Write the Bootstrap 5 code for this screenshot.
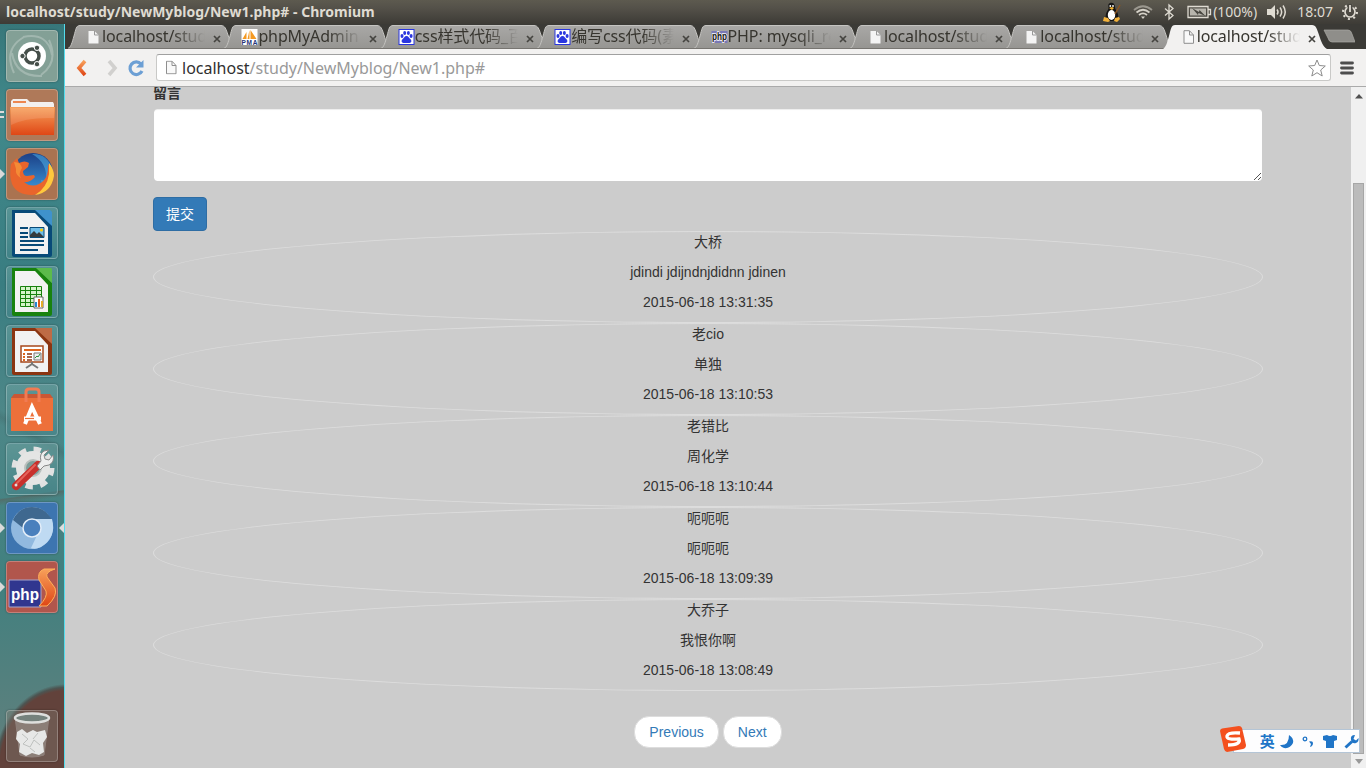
<!DOCTYPE html>
<html lang="zh">
<head>
<meta charset="utf-8">
<title>localhost/study/NewMyblog/New1.php#</title>
<link href="https://cdn.jsdelivr.net/npm/bootstrap@5.3.0/dist/css/bootstrap.min.css" rel="stylesheet">
<style>
body{font-family:"Liberation Sans","Noto Sans CJK SC",sans-serif;font-size:14px;line-height:20px;color:#333;background:#ccc}
svg{display:block;flex:none}
.ui-font{font-family:"Noto Sans","Noto Sans CJK SC",sans-serif}
.sysbar{height:24px;background:linear-gradient(#5d5a4f,#55524a 30%,#3d3b36);color:#dfdbd2;padding-left:6px;padding-right:7px}
.sysbar .caption-text{font-weight:700;font-size:14px;letter-spacing:.02px;white-space:nowrap}
.sysbar .tray-text{font-size:14px;white-space:nowrap}
.dock{width:65px;padding:6px 0 6px 6px;background:radial-gradient(ellipse 72px 84px at 66px 744px,#62423b 0 92%,#4c5552 96%,transparent 100%),linear-gradient(172deg,transparent 63%,#526f6c 63.2%,transparent 64%),linear-gradient(30deg,transparent 44%,#41696a66 45%,transparent 46%),linear-gradient(#37777a,#41898b 12%,#397d81 35%,#4d8788 52%,#41807f 75%,#63807d 100%);border-right:1px solid #54dced;gap:7px}
.tile{width:52px;height:52px;border-radius:4px;border:1px solid #ffffff40;background:linear-gradient(#6fa3a288,#47868c88);box-shadow:0 0 2px #0006}
.tile>svg{margin:-1px}
.pip{left:-6px;top:21px}
.tabs{height:25px;background:#3b3a36;padding-left:3px}
.tab{width:156.4px;height:25px;padding-left:17px;color:#37352f}
.tab .shape{left:0;top:1px}
.tab .ico{width:17px}
.tab .ttl{width:103px;height:24px;line-height:23px;font-size:16px;white-space:nowrap;overflow:hidden;letter-spacing:-.12px;-webkit-mask-image:linear-gradient(90deg,#000 68%,transparent);mask-image:linear-gradient(90deg,#000 68%,transparent)}
.tools{height:38px;background:#f2f1f0;border-bottom:1px solid #aaa;padding-left:10px}
.omni{height:27px;width:1175px;background:#fff;border:1px solid #c9c9c7;border-top-color:#a0a0a0;border-radius:3px;font-size:16px;color:#999}
.omni b{font-weight:400;color:#303030}
.page-pane{background:#ccc}
.wrap{width:1110px;margin-left:88px;margin-top:-4px}
.wrap label{font-weight:700;margin-bottom:5px;height:20px}
.wrap .form-control{height:74px;border:1px solid #ccc;border-radius:4px;box-shadow:inset 0 1px 1px #00000013;resize:none}
.send{height:34px;width:54px;padding:0;font-size:14px;line-height:20px;border-radius:4px;background:#337ab7;border-color:#2e6da4}
.note{height:92px;border:1px solid #ddd;border-radius:50%}
.note p{margin:0 0 10px}
.pg{padding:5px 14px;border:1px solid #ddd;border-radius:15px;background:#fff;color:#337ab7;text-decoration:none}
.sbar{width:15px;background:#f0f0f0;padding:7px 2px 4px}
.thumb{width:11px;height:571px;background:#bbb;border:1px solid #a6a6a6;margin-top:84px}
.ime{left:1219px;top:725px;width:142px;height:30px}
.ime-box{left:14px;top:4px;width:127px;height:24px;background:#fdfdfe;border:1px solid #b4c5d6;color:#2075c7;padding-left:19px}
.ime-box b{font-size:15px;width:16px;line-height:20px}
</style>
</head>
<body class="vh-100 overflow-hidden d-flex flex-column">
<svg width="0" height="0" class="position-absolute"><defs>
<linearGradient id="tg" x2="0" y2="1"><stop stop-color="#a9a8a6"/><stop offset="1" stop-color="#969592"/></linearGradient>
<linearGradient id="or" x2="0" y2="1"><stop stop-color="#f7a05a"/><stop offset="1" stop-color="#df4716"/></linearGradient>
<linearGradient id="gr" x2="0" y2="1"><stop stop-color="#fff"/><stop offset="1" stop-color="#c9c9c9"/></linearGradient>
<linearGradient id="bl" x2="0" y2="1"><stop stop-color="#1b3f86"/><stop offset="1" stop-color="#3d9bdc"/></linearGradient>
<symbol id="shape" viewBox="0 0 168 24"><path d="M0 23.500C3 22 4 18 6 11S8 .5 12 .5H153C157 .5 158 4 160 10S163 22 167 23.500Z" fill="url(#tg)" stroke="#c5c4c1"/><path d="M0 23.500H168" stroke="#777571"/></symbol>
<symbol id="doc" viewBox="0 0 12 14"><path d="M1 1h6l4 4v8.500H1z" fill="#f4f4f4"/><path d="M7 1v4h4" fill="none" stroke="#999"/></symbol>
<symbol id="docline" viewBox="0 0 12 14"><path d="M1.500 .7h5.500l4 4.300v8.300H1.500zM7 1v4h4" fill="#f9f9f9" stroke="#8e8e8e"/></symbol>
<symbol id="x" viewBox="0 0 8 8"><path d="M1 1l6 6M7 1L1 7" stroke="#454440" stroke-width="1.700"/></symbol>
<symbol id="paw" viewBox="0 0 16 16"><path d="M0 0h16v16H0z" fill="#2a36df"/><path d="M1 1h14v14H1z" fill="#fff"/><g fill="#2a36df"><ellipse cx="3.500" cy="7" rx="1.500" ry="2"/><ellipse cx="6.200" cy="4" rx="1.500" ry="2"/><ellipse cx="9.900" cy="4" rx="1.500" ry="2"/><ellipse cx="12.600" cy="7" rx="1.500" ry="2"/><path d="M8 7c2 0 2.500 2 4 3.300s1 3.700-1 3.700H5c-2 0-2.500-2.400-1-3.700S6 7 8 7z"/></g></symbol>
<symbol id="pipl" viewBox="0 0 5 10"><path d="M0 0l5 5-5 5z" fill="#dadada"/></symbol>
</defs></svg>

<header class="sysbar ui-font d-flex align-items-center">
  <div class="caption-text">localhost/study/NewMyblog/New1.php# - Chromium</div>
  <div class="ms-auto d-flex align-items-center">
    <svg width="22" height="22" viewBox="0 0 22 22"><path d="M9 2c3-1 5 1 5 4 0 3 4 6 3 10-1 3-3 4-7 4-5 0-6-3-5-7S8 9 7.500 6 8 2.500 9 2z" fill="#141414"/><ellipse cx="10.500" cy="14" rx="3.700" ry="5" fill="#fff"/><path d="M8 7l3-1 2 1-2 2z" fill="#f8b530"/><path d="M3 16l4 1 2 3-2 1-5-1zM14 17l4-1 1 2-3 3-3-1z" fill="#f3b23b"/><path d="M14 13l5-9" stroke="#8b5422" stroke-width="1.500"/><circle cx="9.300" cy="5" r=".9" fill="#fff"/><circle cx="12" cy="5" r=".9" fill="#fff"/></svg>
    <svg class="ms-2" width="24" height="18" viewBox="0 0 24 18" fill="none" stroke="#d6d2c9" stroke-width="1.700"><path d="M3 7Q12-.5 21 7" opacity=".55"/><path d="M5.500 9.500q6.500-5.500 13 0M8 12q4-3.300 8 0"/><path d="M10 13.500h4l-2 2.500z" fill="#d6d2c9" stroke="none"/></svg>
    <svg class="ms-1" width="20" height="18" viewBox="0 0 20 18" fill="none" stroke="#dfdbd2" stroke-width="1.300"><path d="M6 5.500l8 7L10 16V2l4 3.500-8 7"/></svg>
    <svg class="ms-2" width="26" height="14" viewBox="0 0 26 14"><path d="M1 1.500h20v11H1zM21.500 4.500h2v5h-2" fill="none" stroke="#dfdbd2" stroke-width="1.300"/><path d="M3 3.500h16v7H3z" fill="#b7b4ac"/><path d="M5 3l7 4 .5-2 6 6-7-3-.5 2z" fill="#47453f"/></svg>
    <span class="tray-text battery">(100%)</span>
    <svg class="ms-2 me-2" width="24" height="18" viewBox="0 0 24 18"><path d="M2 6h4l4-4v14l-4-4H2z" fill="#dfdbd2"/><path d="M12 6.500q2 2.500 0 5M15 4.500q3.300 4.500 0 9M18 2.500q4.500 6.500 0 13" stroke="#dfdbd2" stroke-width="1.500" fill="none"/></svg>
    <span class="tray-text clock">18:07</span>
    <svg class="ms-2" width="18" height="18" viewBox="0 0 18 18" fill="none" stroke="#dfdbd2"><circle cx="9" cy="9" r="5" stroke-width="1.700"/><circle cx="9" cy="9" r="7" stroke-width="2" stroke-dasharray="2 3.500"/><path d="M9 1v7" stroke="#4b4942" stroke-width="5"/><path d="M9 2v7" stroke-width="1.800"/></svg>
  </div>
</header>

<div class="d-flex flex-grow-1 overflow-hidden">
<nav class="dock d-flex flex-column flex-shrink-0">
  <div class="tile" style="background:#83a096"><svg width="52" height="52"><path d="M8 43Q-3 19 18 7 M43 10Q53 32 35 45M17 7Q42 2 46 25M6 23Q10 47 36 46" fill="none" stroke="#b5c7bf" stroke-width="2" opacity=".6"/><circle cx="26" cy="26" r="14" fill="#fff"/><circle cx="26" cy="26" r="7" fill="none" stroke="#454e49" stroke-width="3.500"/><g fill="#454e49" stroke="#fff"><circle cx="16.500" cy="26" r="2.700"/><circle cx="31" cy="17.800" r="2.700"/><circle cx="31" cy="34.200" r="2.700"/></g></svg></div>
  <div class="tile position-relative" style="background:#af7959"><svg class="position-absolute pip" width="5" height="10" style="left:-7px"><path d="M0 2h5M0 7h5" stroke="#ddd" stroke-width="2"/></svg><svg width="52" height="52"><path d="M5 20V12l2-2h14l3 3h23l1 2v6z" fill="#f3f0ee"/><path d="M7 13h13" stroke="#ed8750" stroke-width="2"/><path d="M4 18h45l-1 28H5z" fill="url(#or)"/><path d="M5 19h43v10Q20 28 5 36z" fill="#fff" opacity=".12"/></svg></div>
  <div class="tile position-relative" style="background:#aa7350"><svg class="position-absolute pip" width="5" height="10"><use href="#pipl"/></svg><svg width="52" height="52"><circle cx="27" cy="25" r="20" fill="url(#bl)"/><path d="M26 6q15-1 20 15 2 14-9 21l-2-10 5 1Q42 15 26 6z" fill="#4eb1e5" opacity=".55"/><path d="M5 16l6-6 2 5q6-3 10 0l-1 4-5 4q0 5 4 5l7-1 1 2q-5 6-11 5 7 6 15 2 10-5 9-20 5 7 2 17-4 13-18 14Q11 47 6 36 3 27 5 16z" fill="#e9652c"/><path d="M43 15q5 6 5 13-3 17-19 19 12-7 14-21z" fill="#ffc83d"/><path d="M8 14q7 0 8 6-4 6-1 10-6-3-5-9z" fill="#f48b36"/></svg></div>
  <div class="tile"><svg width="52" height="52"><path d="M6 3H32L46 17V48Q46 50 44 50H8Q6 50 6 48z" fill="#084a78"/><path d="M9 6h20l13 14v27H9z" fill="#f2f2f2"/><path d="M29 3h15l2 2v14z" fill="#3f92cc"/><path d="M14 21h8M14 26h8M14 30h8M14 34h24M14 38h24M14 43h18" stroke="#084a78" stroke-width="2"/><path d="M24 20.500h14v10H24z" fill="#6fbde8" stroke="#084a78"/><path d="M24 30v-2l4-4 3 3 2-2 5 5z" fill="#343a3d"/><circle cx="35.500" cy="23" r="1.500" fill="#fc0"/></svg></div>
  <div class="tile"><svg width="52" height="52"><path d="M6 2H32L46 17V48Q46 50 44 50H8Q6 50 6 48z" fill="#18820e"/><path d="M9 5h20l13 14v27H9z" fill="#f2f2f2"/><path d="M30 2h15l1 1v14z" fill="#5cbb4b"/><path d="M14.500 20.500h21v20h-21z" fill="#d6f3ca"/><path d="M14.500 20.500h21v20h-21zM14 24.500h22M14 28.500h22M14 32.500h22M14 36.500h22M19.500 20v20M24.500 20v20M30.500 20v20" fill="none" stroke="#18820e"/><path d="M28 31h9v11h-9z" fill="#fff" stroke="#666"/><path d="M29 36h2v5h-2z" fill="#2587d2"/><path d="M32 33h2v8h-2z" fill="#dd5b1d"/><path d="M35 35h2v6h-2z" fill="#e3ac29"/></svg></div>
  <div class="tile"><svg width="52" height="52"><path d="M6 3H32L46 17V48Q46 50 44 50H8Q6 50 6 48z" fill="#8b3511"/><path d="M9 6h20l13 14v27H9z" fill="#f2f2f2"/><path d="M29 3h17v16z" fill="#be6b45"/><path d="M15 21h22v16H15z" fill="#fff" stroke="#a6481c" stroke-width="1.500"/><path d="M18 25h17" stroke="#df651c" stroke-width="2"/><path d="M17 29h2M17 32h2M17 35h2" stroke="#df651c" stroke-width="2"/><path d="M21 29h5M21 32h5M21 35h5" stroke="#8b3511" stroke-width="1.500"/><path d="M28 28h7v7h-7z" fill="#eee" stroke="#777"/><path d="M29 33l2-2 1 1 2-3" fill="none" stroke="#28923b"/><path d="M26 37v2l-6 4M26 39l6 4" stroke="#777" stroke-width="2" fill="none"/></svg></div>
  <div class="tile"><svg width="52" height="52"><path d="M5 14h42v33H5z" fill="#ed703a"/><path d="M8 10h36l3 4H5z" fill="#cb5734"/><path d="M20 18V8q0-3 3-3h7q3 0 3 3v10" fill="none" stroke="#f17b53" stroke-width="3"/><g fill="none" stroke="#fff"><path d="M19 40l7-17 8 17" stroke-width="4"/><path d="M18 34.500h17" stroke-width="4"/></g><path d="M19 34.500h9" stroke="#ed703a" stroke-width="1.200"/></svg></div>
  <div class="tile"><svg width="52" height="52"><circle cx="27" cy="25" r="18" fill="none" stroke="#e1e1e1" stroke-width="7" stroke-dasharray="7 7.137"/><circle cx="27" cy="25" r="12.500" fill="none" stroke="#e4e5e4" stroke-width="9"/><circle cx="27" cy="25" r="8" fill="#7c9d99" stroke="#b9c0bd" stroke-width="2"/><path d="M32 22L10 43" stroke="#c8302c" stroke-width="8" stroke-linecap="round"/><path d="M29 22L11 40" stroke="#e5635b" stroke-width="2" stroke-linecap="round"/><path d="M31 23l4-5q-2-7 3-10l5-1-5 5 1 4 4 1 4-5q2 7-4 10l-5 1-4 4z" fill="#eee" stroke="#888"/><circle cx="10" cy="42" r="1.500" fill="#ddd"/></svg></div>
  <div class="tile position-relative" style="background:#3d75b0"><svg class="position-absolute pip" width="5" height="10"><use href="#pipl"/></svg><svg class="position-absolute" width="5" height="10" style="left:53px;top:21px"><path d="M5 0L0 5l5 5z" fill="#ddd"/></svg><svg width="52" height="52"><circle cx="26" cy="26" r="21" fill="#91b9df"/><path d="M7 18Q13 5 26 5t20 13H26q-8 0-9 8z" fill="#3f688f"/><path d="M46 17q5 18-11 28-6 3-10 1l9-19q0-7-5-10z" fill="#bfdaf2"/><circle cx="26" cy="26" r="9" fill="#4a80bd" stroke="#e3edf8" stroke-width="1.500"/></svg></div>
  <div class="tile position-relative" style="background:#b1564c"><svg class="position-absolute pip" width="5" height="10"><use href="#pipl"/></svg><svg width="52" height="52"><path d="M3 19h32v27H3z" fill="#30368f" stroke="#a5a3cb"/><text x="5" y="39" font-family="Liberation Sans" font-size="17" font-weight="700" fill="#fff" textLength="28" lengthAdjust="spacingAndGlyphs">php</text><path d="M49 8H38q-7 3-5 11l7 11q2 6-7 15h8q11-10 8-18l-8-11q-2-5 8-8z" fill="url(#or)" stroke="#ffb15a"/></svg></div>
  <div class="tile mt-auto" style="background:#817b7066"><svg width="52" height="52"><path d="M9 7l5 38q12 4 24 0l5-38z" fill="#ced5d2" opacity=".3" stroke="#ddd"/><ellipse cx="26" cy="8" rx="17" ry="4.500" fill="#75827d" stroke="#dedfdd" stroke-width="2.500"/><path d="M11 22l5-3 5 4 6-3 4 2 8-2 2 7-4 6 1 9-5 3-7-2-6 3-7-4 1-8-4-5z" fill="#e7e8e7"/><path d="M16 24l6 5-5 5 7 3 4-7 6 5M24 38l5 4M32 23l-5 6" stroke="#bec1bf" fill="none"/></svg></div>
</nav>

<main class="flex-grow-1 d-flex flex-column overflow-hidden">
  <div class="tabs ui-font d-flex flex-shrink-0">
    <div class="tab flex-shrink-0 d-flex align-items-center position-relative"><svg class="shape position-absolute" width="168" height="24"><use href="#shape"/></svg><svg class="ico position-relative" width="12" height="14"><use href="#doc"/></svg><span class="ttl position-relative">localhost/study</span><svg class="position-relative ms-2 mt-1" width="8" height="8"><use href="#x"/></svg></div>
    <div class="tab flex-shrink-0 d-flex align-items-center position-relative"><svg class="shape position-absolute" width="168" height="24"><use href="#shape"/></svg><svg class="ico position-relative" viewBox="0 0 16 16" width="16" height="16"><path d="M0 0h16v16H0z" fill="#fff"/><path d="M1 10L5 3v7zM6 10L8 1v9zM9 1l6 9H9z" fill="#f59a22"/><text x="0" y="15.500" font-size="6.500" font-weight="700" font-family="Liberation Sans" fill="#243377" textLength="16">PMA</text></svg><span class="ttl position-relative">phpMyAdmin</span><svg class="position-relative ms-2 mt-1" width="8" height="8"><use href="#x"/></svg></div>
    <div class="tab flex-shrink-0 d-flex align-items-center position-relative"><svg class="shape position-absolute" width="168" height="24"><use href="#shape"/></svg><svg class="ico position-relative" width="16" height="16"><use href="#paw"/></svg><span class="ttl position-relative">css样式代码_百度</span><svg class="position-relative ms-2 mt-1" width="8" height="8"><use href="#x"/></svg></div>
    <div class="tab flex-shrink-0 d-flex align-items-center position-relative"><svg class="shape position-absolute" width="168" height="24"><use href="#shape"/></svg><svg class="ico position-relative" width="16" height="16"><use href="#paw"/></svg><span class="ttl position-relative">编写css代码(素</span><svg class="position-relative ms-2 mt-1" width="8" height="8"><use href="#x"/></svg></div>
    <div class="tab flex-shrink-0 d-flex align-items-center position-relative"><svg class="shape position-absolute" width="168" height="24"><use href="#shape"/></svg><svg class="ico position-relative" viewBox="0 0 16 16" width="16" height="16"><path d="M0 2h16v12H0z" fill="#7878b5"/><text x=".5" y="10.500" font-size="10" font-weight="700" font-family="Liberation Sans" fill="#111" stroke="#fff" stroke-width="1.500" paint-order="stroke" textLength="15" lengthAdjust="spacingAndGlyphs">php</text></svg><span class="ttl position-relative">PHP: mysqli_real</span><svg class="position-relative ms-2 mt-1" width="8" height="8"><use href="#x"/></svg></div>
    <div class="tab flex-shrink-0 d-flex align-items-center position-relative"><svg class="shape position-absolute" width="168" height="24"><use href="#shape"/></svg><svg class="ico position-relative" width="12" height="14"><use href="#doc"/></svg><span class="ttl position-relative">localhost/study</span><svg class="position-relative ms-2 mt-1" width="8" height="8"><use href="#x"/></svg></div>
    <div class="tab flex-shrink-0 d-flex align-items-center position-relative"><svg class="shape position-absolute" width="168" height="24"><use href="#shape"/></svg><svg class="ico position-relative" width="12" height="14"><use href="#doc"/></svg><span class="ttl position-relative">localhost/study</span><svg class="position-relative ms-2 mt-1" width="8" height="8"><use href="#x"/></svg></div>
    <div class="tab flex-shrink-0 d-flex align-items-center position-relative"><svg class="shape position-absolute" width="168" height="24"><path d="M0 24C3 22 4 18 6 11S8 0 12 0H149C153 0 154 4 156 10S160 22 164 24Z" fill="#f2f1f0"/></svg><svg class="ico position-relative" width="12" height="14"><use href="#docline"/></svg><span class="ttl position-relative">localhost/study</span><svg class="position-relative ms-2 mt-1" width="8" height="8"><use href="#x"/></svg></div>
    <svg class="ms-1 mt-1" width="32" height="18"><path d="M3 2h22q3 0 4 4l3 8H9q-3 0-4-4L1 2z" fill="#8f8e8a" stroke="#aaa9a5" stroke-width=".7"/></svg>
  </div>
  <div class="tools ui-font d-flex align-items-center flex-shrink-0">
    <svg width="13" height="18" viewBox="0 0 13 18"><path d="M10 2L4 9l6 7" fill="none" stroke="url(#or)" stroke-width="3.600"/></svg>
    <svg width="13" height="18" viewBox="0 0 13 18" style="margin-left:18px"><path d="M3 2l6 7-6 7" fill="none" stroke="#d1d0ce" stroke-width="3.600"/></svg>
    <svg class="ms-2" width="18" height="18" viewBox="0 0 18 18" style="margin-right:11px"><path d="M15 12a6.300 6.300 0 1 1-1-7" fill="none" stroke="#6c9fd4" stroke-width="3.200"/><path d="M16.500 1v7.500H9z" fill="#6c9fd4"/></svg>
    <div class="omni d-flex align-items-center"><svg class="ms-2" width="12" height="15" viewBox="0 0 12 14" style="margin-right:5px"><use href="#docline"/></svg><span class="url"><b>localhost</b>/study/NewMyblog/New1.php#</span><svg class="ms-auto me-1" width="18" height="18" viewBox="0 0 18 18"><path d="M9 1l2.300 5.500 6 .5-4.600 4 1.500 6L9 13.700 3.800 17l1.500-6L.7 7l6-.5z" fill="#fff" stroke="#8b8b8b" stroke-linejoin="round"/></svg></div>
    <svg style="margin-left:9px" width="15" height="14"><path d="M1.500 2h11M1.500 7h11M1.500 12h11" stroke="#4d4d4d" stroke-width="2.800" stroke-linecap="round"/></svg>
  </div>
  <div class="page-pane d-flex flex-grow-1 overflow-hidden">
    <div class="flex-grow-1 overflow-hidden">
      <div class="wrap">
        <label class="d-block" for="msg">留言</label>
        <div class="position-relative"><textarea id="msg" class="form-control"></textarea><svg class="position-absolute" style="right:1px;bottom:1px" width="9" height="9"><path d="M1 8L8 1M5 8l3-3" stroke="#555"/></svg></div>
        <button class="btn btn-primary send d-block" style="margin-top:15px">提交</button>
        <div class="note text-center"><p>大桥</p><p>jdindi jdijndnjdidnn jdinen</p><p>2015-06-18 13:31:35</p></div>
        <div class="note text-center"><p>老cio</p><p>单独</p><p>2015-06-18 13:10:53</p></div>
        <div class="note text-center"><p>老错比</p><p>周化学</p><p>2015-06-18 13:10:44</p></div>
        <div class="note text-center"><p>呃呃呃</p><p>呃呃呃</p><p>2015-06-18 13:09:39</p></div>
        <div class="note text-center"><p>大乔子</p><p>我恨你啊</p><p>2015-06-18 13:08:49</p></div>
        <div class="d-flex justify-content-center gap-1" style="margin-top:25px"><a class="pg" href="#">Previous</a><a class="pg" href="#">Next</a></div>
      </div>
    </div>
    <div class="sbar d-flex flex-column align-items-center flex-shrink-0"><svg width="8" height="5"><path d="M0 4.500L4 0l4 4.500z" fill="#505050"/></svg><div class="thumb flex-shrink-0"></div><svg class="mt-auto" width="8" height="5"><path d="M0 0h8L4 5z" fill="#999"/></svg></div>
  </div>
</main>
</div>

<div class="ime position-absolute">
  <div class="ime-box position-absolute d-flex align-items-center ui-font"><span style="width:7px"></span><b>英</b>
    <svg style="margin-left:5px" width="14" height="15" viewBox="0 0 14 15"><path d="M9 1q5 3 4 8-3 6-9 5-3-1-4-3 9 1 9-10z" fill="#2075c7"/></svg>
    <svg style="margin-left:8px" width="13" height="15" viewBox="0 0 13 15"><circle cx="3" cy="5" r="1.800" fill="none" stroke="#2075c7" stroke-width="1.300"/><path d="M7 7.500q4-1 4 1.500 0 3-3 4l1-3z" fill="#2075c7"/></svg>
    <svg style="margin-left:8px" width="14" height="15" viewBox="0 0 14 15"><path d="M0 2l4-1q3 2 6 0l4 1v4l-3 1v7H3V7L0 6z" fill="#2075c7"/></svg>
    <svg style="margin-left:7px" width="15" height="15" viewBox="0 0 15 15"><path d="M1.500 13.500L8 7.500" stroke="#2075c7" stroke-width="3"/><path d="M11 1q-5 0-4 5 1 4 5 3 3-1 2.500-5L12 6.500 9.500 5z" fill="#2075c7"/></svg>
  </div>
  <svg class="position-absolute" width="30" height="30"><path d="M1 6Q1 4 3 3.500L20 1q2 0 3 2l4 17q0 3-3 4L8 27q-2 0-3-3z" fill="#f4501e"/><path d="M21 8Q9 7 8 11t12 3q2 6-11 6" fill="none" stroke="#fff" stroke-width="3.300"/></svg>
</div>
<script src="https://cdn.jsdelivr.net/npm/bootstrap@5.3.0/dist/js/bootstrap.bundle.min.js"></script>
</body>
</html>
